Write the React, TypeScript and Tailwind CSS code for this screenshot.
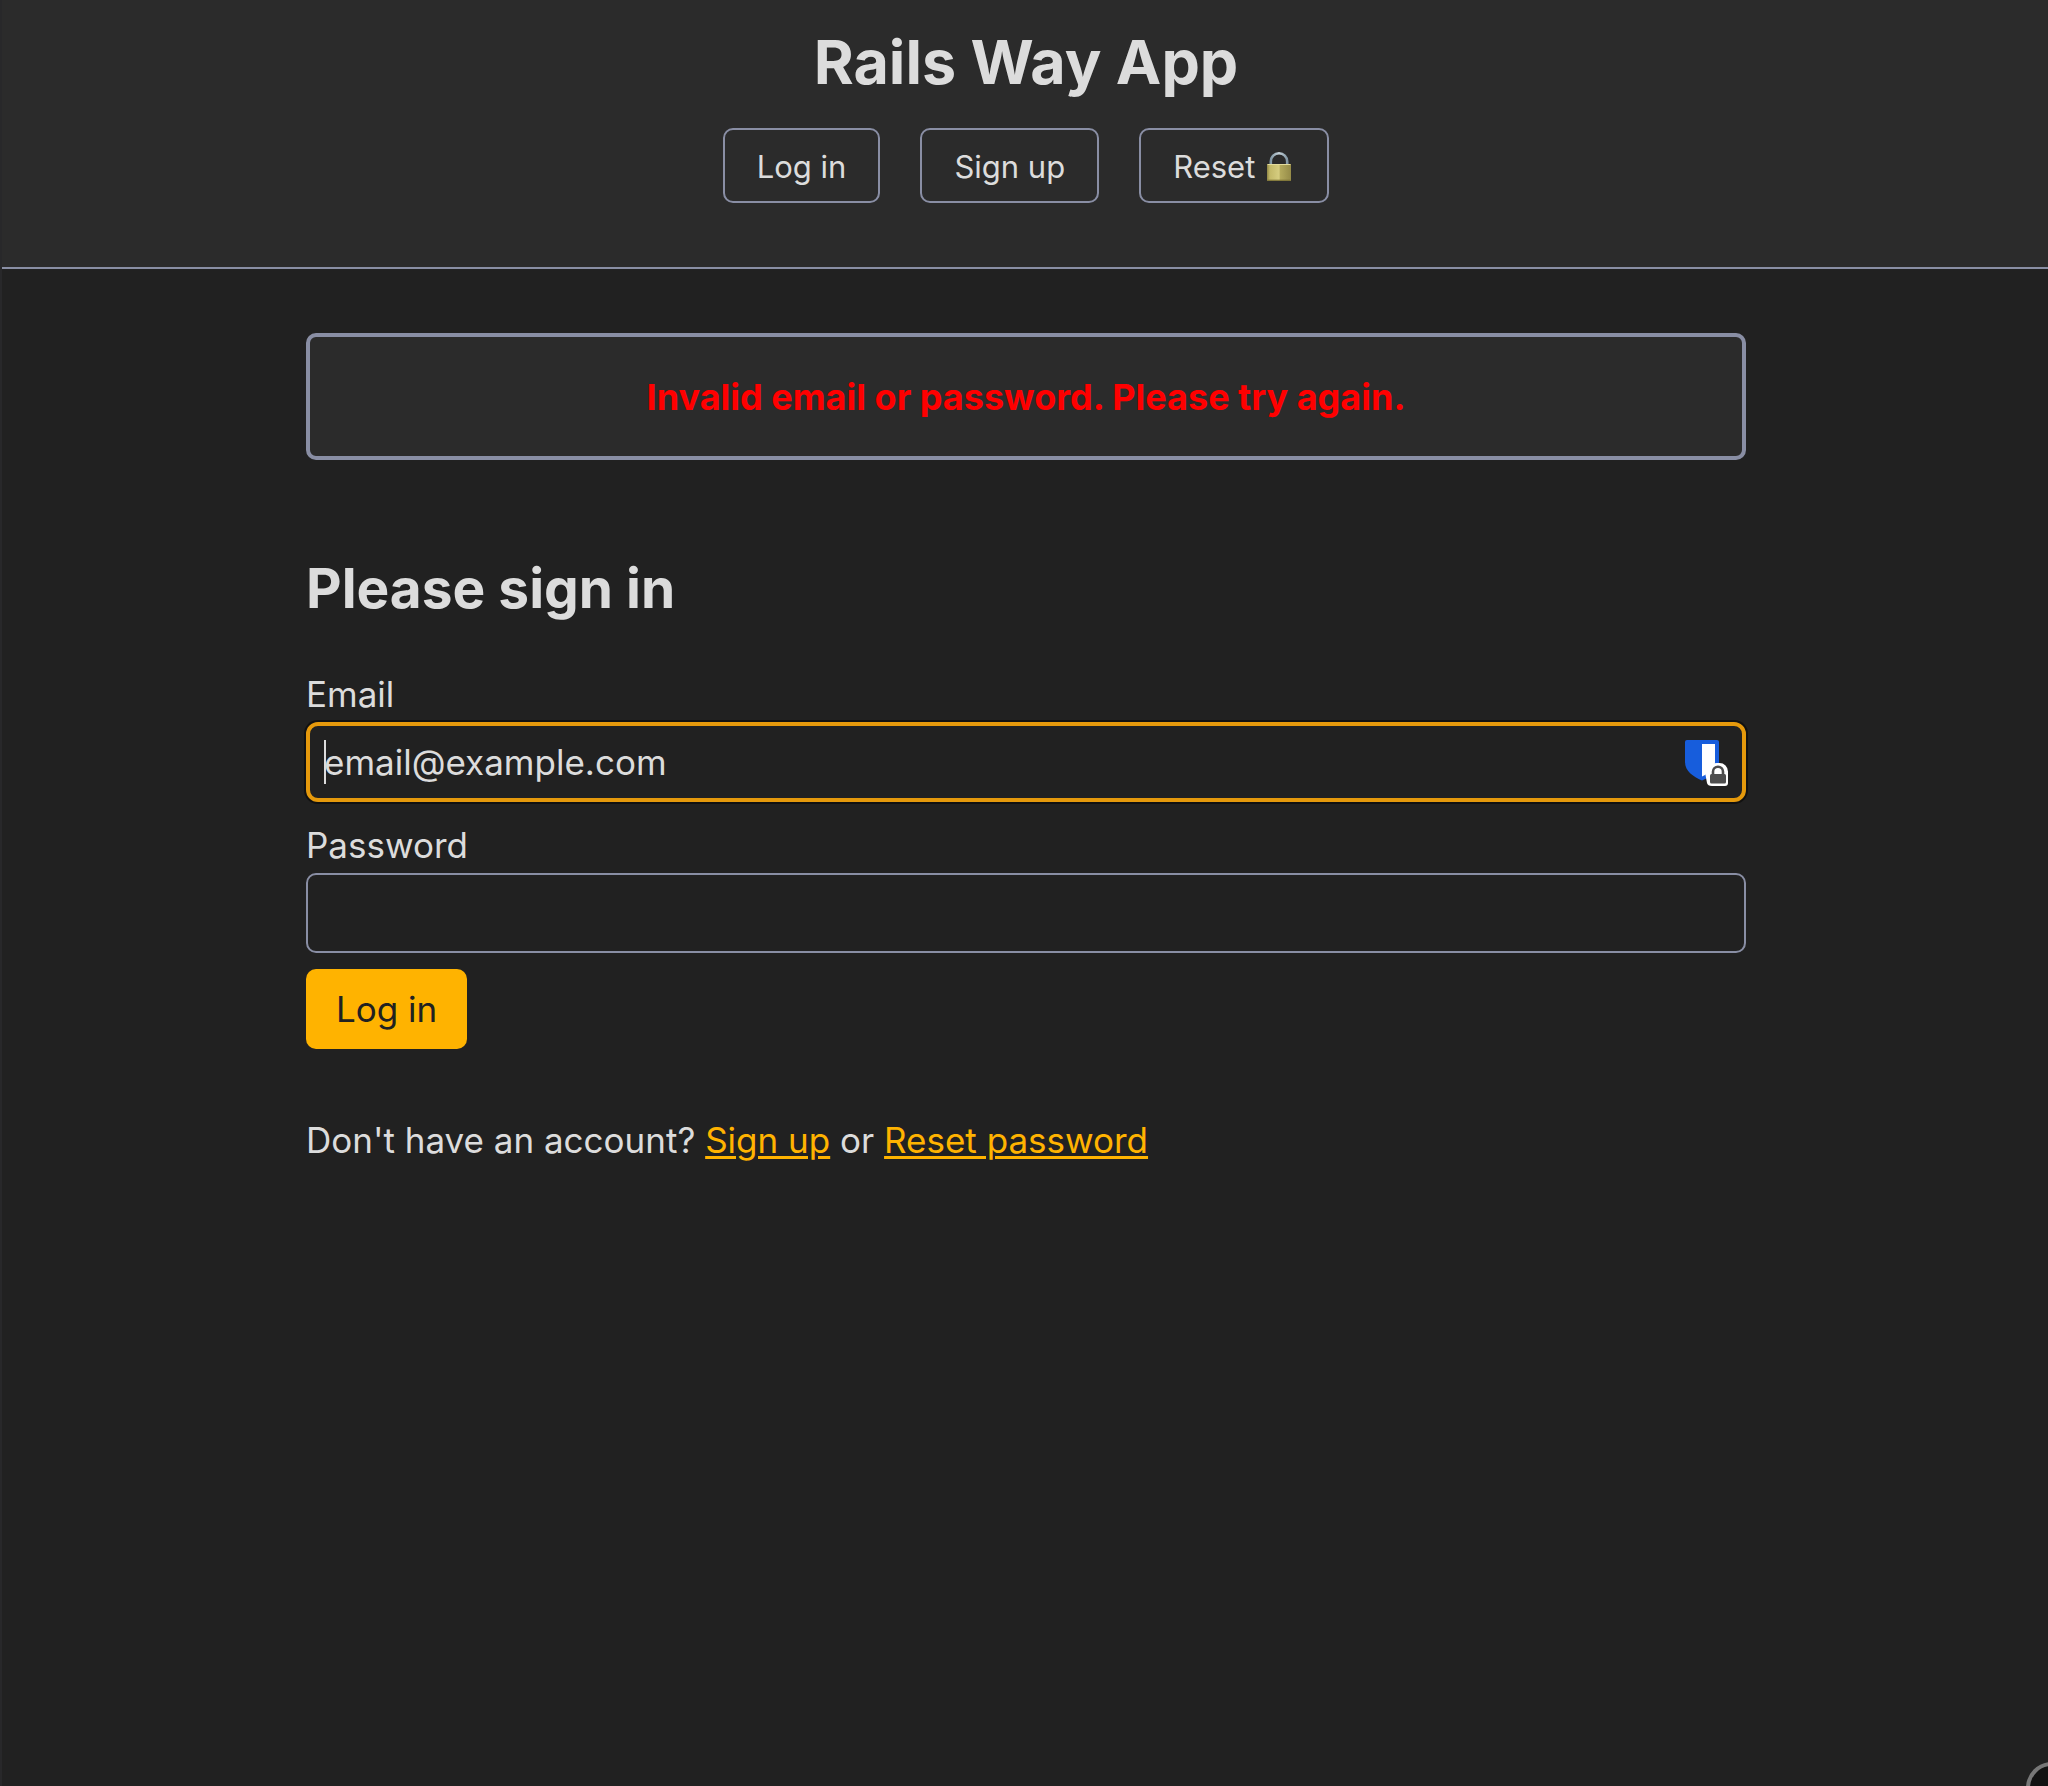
import React from "react";

const navItem =
  "flex items-center gap-2 rounded-[10px] border-2 border-[#898ea4] px-8 pt-[18px] pb-4 leading-[37px] text-[#dcdcdc]";

function PadlockEmoji() {
  return (
    <svg role="img" aria-label="locked" viewBox="0 0 24 29" className="mx-1 h-[29px] w-6">
      <defs>
        <linearGradient id="brass" x1="0" x2="1" y1="0" y2="0">
          <stop offset="0" stopColor="#8f8545" />
          <stop offset="0.12" stopColor="#c3b968" />
          <stop offset="0.5" stopColor="#d6cd80" />
          <stop offset="0.56" stopColor="#b3a95c" />
          <stop offset="1" stopColor="#958b48" />
        </linearGradient>
        <linearGradient id="steel" x1="0" x2="1" y1="0" y2="0">
          <stop offset="0" stopColor="#7f95a3" />
          <stop offset="0.5" stopColor="#c6d3da" />
          <stop offset="1" stopColor="#8397a4" />
        </linearGradient>
      </defs>
      <path d="M3.8 13V9.500a8.200 8.200 0 0 1 16.400 0V13" fill="none" stroke="url(#steel)" strokeWidth="2.6" />
      <rect x="0" y="12" width="24" height="17" rx="0.8" fill="url(#brass)" />
      <path d="M0.5 12.5h23" stroke="#e3dc9c" strokeWidth="1" />
      <path d="M0.5 28.3h23" stroke="#7d7438" strokeWidth="1.2" />
    </svg>
  );
}

function VaultIcon() {
  return (
    <svg aria-hidden="true" viewBox="0 0 44 47" className="h-[47px] w-11">
      <path
        d="M2 0h30a2 2 0 0 1 2 2V22c0 9-8 14.500-17 18.500C8 36.500 0 31 0 22V2a2 2 0 0 1 2-2z"
        fill="#175ddc"
      />
      <path d="M17 4h13v18c0 6.500-6 11-13 14.500z" fill="#fff" />
      <path
        d="M32 23h2.500a8.500 8.500 0 0 1 8.500 8.500V43a3 3 0 0 1-3 3H27c-3 0-4.500-1-5-3l-1.500-8c0-7 4.500-12 11.500-12z"
        fill="#fff"
      />
      <path d="M28 35v-3.200a5 5 0 0 1 10 0V35" fill="none" stroke="#4d4d4d" strokeWidth="2.600" />
      <rect x="25" y="34" width="16" height="9.500" rx="1.500" fill="#4d4d4d" />
    </svg>
  );
}

export default function App() {
  return (
    <div className="relative min-h-screen overflow-hidden border-l-2 border-[#28282a] bg-[#212121] font-['Inter',sans-serif] text-[35px] text-[#dcdcdc]">
      <header className="border-b-2 border-[#898ea4] bg-[#2b2b2b] pt-6 pb-16 pl-0.5">
        <h1 className="text-center text-[61px] leading-[76px] font-bold">Rails Way App</h1>
        <nav className="mt-7 flex flex-wrap justify-center gap-10 text-[31px]">
          <a href="#login" className={navItem}>
            Log in
          </a>
          <a href="#signup" className={navItem}>
            Sign up
          </a>
          <a href="#reset" className={navItem}>
            Reset
            <PadlockEmoji />
          </a>
        </nav>
      </header>

      <div className="pl-0.5">
        <main className="mx-auto w-[90%] max-w-[1440px] pt-16 pb-16">
          <p
            role="alert"
            className="rounded-[10px] border-4 border-[#898ea4] bg-[#2b2b2b] px-8 pt-[33px] pb-[31px] text-center text-[36px] leading-[55px] font-bold text-[#ff0000]"
          >
            Invalid email or password. Please try again.
          </p>

          <h2 className="mt-24 text-[55px] leading-[64px] font-bold">Please sign in</h2>

          <form className="mt-[51px]" onSubmit={(e) => e.preventDefault()}>
            <label htmlFor="email" className="block leading-[47px]">
              Email
            </label>
            <div className="relative mt-1">
              <input
                id="email"
                type="email"
                placeholder="email@example.com"
                className="block h-20 w-full rounded-[12px] border-4 border-[#e5990c] bg-[#212121] px-[14px] caret-transparent ring-2 ring-[#111111] outline-none placeholder:text-[#dcdcdc]"
              />
              <span className="absolute top-[18px] left-[18px] h-11 w-0.5 bg-[#dcdcdc]" />
              <span className="absolute top-[18px] right-[17px]">
                <VaultIcon />
              </span>
            </div>

            <label htmlFor="password" className="mt-5 block leading-[47px]">
              Password
            </label>
            <input
              id="password"
              type="password"
              className="mt-1 block h-20 w-full rounded-[10px] border-2 border-[#898ea4] bg-[#212121] px-4 outline-none"
            />

            <button type="submit" className="mt-4 block h-20 rounded-[10px] bg-[#ffb300] px-[30px] text-[#212121]">
              Log in
            </button>
          </form>

          <p className="mt-[68px] leading-[47px]">
            Don't have an account?{" "}
            <a href="#signup" className="text-[#ffb300] underline decoration-[3px] underline-offset-[3px]">
              Sign up
            </a>{" "}
            or{" "}
            <a href="#reset" className="text-[#ffb300] underline decoration-[3px] underline-offset-[3px]">
              Reset password
            </a>
          </p>
        </main>
      </div>

      <span className="absolute -right-[30px] -bottom-7 h-[52px] w-[52px] rounded-full border-4 border-[#777777] bg-[#121212]" />
    </div>
  );
}
